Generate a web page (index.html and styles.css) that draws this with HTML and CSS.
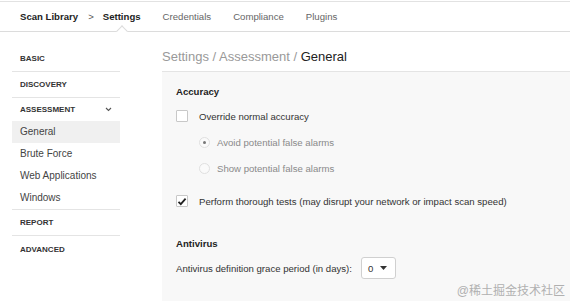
FILE: index.html
```html
<!DOCTYPE html>
<html lang="en">
<head>
  <meta charset="UTF-8" />
  <title>Scan Settings</title>
  <link rel="stylesheet" href="styles.css">
</head>
<body>

  <!-- Top nav -->
  <div class="topbar">
    <span class="crumb">Scan Library</span>
    <span class="sep">&gt;</span>
    <span class="tab active">Settings</span>
    <span class="tab">Credentials</span>
    <span class="tab">Compliance</span>
    <span class="tab">Plugins</span>
  </div>

  <div class="main">
    <!-- Sidebar -->
    <div class="sidebar">
      <div class="group">BASIC</div>
      <div class="group">DISCOVERY</div>
      <div class="group open">
        <span>ASSESSMENT</span>
        <svg class="chev" width="7" height="5" viewBox="0 0 7 5"><path d="M1 1l2.5 2.5L6 1" fill="none" stroke="#555" stroke-width="1.1"/></svg>
      </div>
      <div class="sub selected">General</div>
      <div class="sub">Brute Force</div>
      <div class="sub">Web Applications</div>
      <div class="sub last">Windows</div>
      <div class="group">REPORT</div>
      <div class="group">ADVANCED</div>
    </div>

    <!-- Content -->
    <div class="content">
      <h1 class="page-title">Settings / Assessment / <b>General</b></h1>
      <div class="panel">
        <h3>Accuracy</h3>
        <div class="row">
          <span class="check"></span>
          <span>Override normal accuracy</span>
        </div>
        <div class="row indent muted">
          <span class="radio on"></span>
          <span>Avoid potential false alarms</span>
        </div>
        <div class="row indent muted">
          <span class="radio"></span>
          <span>Show potential false alarms</span>
        </div>
        <div class="row gap">
          <span class="check checked">
            <svg width="10" height="9" viewBox="0 0 10 9"><path d="M1.5 4.8l2.3 2.3L8.6 1.6" fill="none" stroke="#222" stroke-width="1.8"/></svg>
          </span>
          <span>Perform thorough tests (may disrupt your network or impact scan speed)</span>
        </div>

        <h3 class="section">Antivirus</h3>
        <div class="row">
          <span>Antivirus definition grace period (in days):</span>
          <span class="select">0 <svg width="7" height="4" viewBox="0 0 7 4"><path d="M0 0h7L3.5 4z" fill="#333"/></svg></span>
        </div>
        <div class="watermark">@稀土掘金技术社区</div>
      </div>
    </div>
  </div>

</body>
</html>
```

FILE: styles.css
```css
* {
  box-sizing: border-box;
}

body {
  margin: 0;
  font-family: "Helvetica Neue", "Liberation Sans", Arial, "Noto Sans CJK SC", sans-serif;
  font-size: 9.6px;
  color: #333;
  background: #fff;
  height: 301px;
  overflow: hidden;
}

.topbar {
  height: 31px;
  border-top: 1px solid #e2e2e2;
  border-bottom: 1px solid #dcdcdc;
  margin-top: 1px;
  display: flex;
  align-items: center;
  padding-left: 20px;
  font-size: 9.6px;
}

.crumb {
  font-weight: bold;
  color: #222;
}

.sep {
  margin: 0 9px 0 10px;
  color: #555;
}

.tab {
  color: #666;
  margin-right: 22px;
  position: relative;
}

.tab.active {
  font-weight: bold;
  color: #222;
}

.tab.active::after {
  content: "";
  position: absolute;
  left: 15px;
  top: 16px;
  width: 7px;
  height: 7px;
  background: #fff;
  border-left: 1px solid #dcdcdc;
  border-top: 1px solid #dcdcdc;
  transform: rotate(45deg);
}

.main {
  display: flex;
}

.sidebar {
  width: 108px;
  margin-left: 12px;
  padding-top: 14px;
  flex-shrink: 0;
}

.group {
  font-size: 8px;
  font-weight: bold;
  color: #333;
  height: 26px;
  padding: 0 8px;
  border-bottom: 1px solid #e4e4e4;
  display: flex;
  justify-content: space-between;
  align-items: center;
}

.group:last-child {
  border-bottom: none;
}

.group.open {
  border-bottom: none;
  height: 23px;
}

.sub {
  height: 22px;
  line-height: 22px;
  padding-left: 8px;
  font-size: 10px;
  color: #444;
}

.sub.selected {
  background: #f0f0f0;
}

.sub.last {
  height: 23px;
  border-bottom: 1px solid #e4e4e4;
}

.content {
  flex: 1;
  margin-left: 42px;
}

.page-title {
  font-size: 13px;
  font-weight: normal;
  color: #999;
  margin: 0;
  height: 40px;
  padding-top: 17px;
  border-bottom: 1px solid #e4e4e4;
}

.page-title b {
  font-weight: normal;
  color: #222;
}

.panel {
  background: #f8f8f8;
  padding: 13px 14px 0 14px;
  height: 229px;
  position: relative;
}

.panel h3 {
  font-size: 9.6px;
  font-weight: bold;
  color: #222;
  height: 13px;
  line-height: 13px;
  margin: 0 0 5px 0;
}

.panel h3.section {
  margin-top: 23px;
}

.row {
  display: flex;
  align-items: center;
  height: 26px;
  color: #333;
}

.row.gap {
  margin-top: 7px;
}

.row.indent {
  padding-left: 23px;
}

.row.muted {
  color: #8a8a8a;
}

.check {
  width: 12px;
  height: 12px;
  border: 1px solid #c8c8c8;
  background: #fff;
  border-radius: 1px;
  margin-right: 11px;
  display: flex;
  align-items: center;
  justify-content: center;
}

.radio {
  width: 11px;
  height: 11px;
  border: 1px solid #e0e0e0;
  border-radius: 50%;
  background: #fafafa;
  margin-right: 7px;
  position: relative;
}

.radio.on::after {
  content: "";
  position: absolute;
  left: 3px;
  top: 3px;
  width: 3px;
  height: 3px;
  border-radius: 50%;
  background: #777;
}

.select {
  margin-left: 9px;
  width: 35px;
  height: 22px;
  padding: 0 8px 0 6px;
  border: 1px solid #d0d0d0;
  border-radius: 3px;
  background: #fff;
  display: flex;
  align-items: center;
  justify-content: space-between;
}

.watermark {
  position: absolute;
  right: 5px;
  bottom: 3px;
  font-size: 12px;
  color: #b0b0b0;
}
```
